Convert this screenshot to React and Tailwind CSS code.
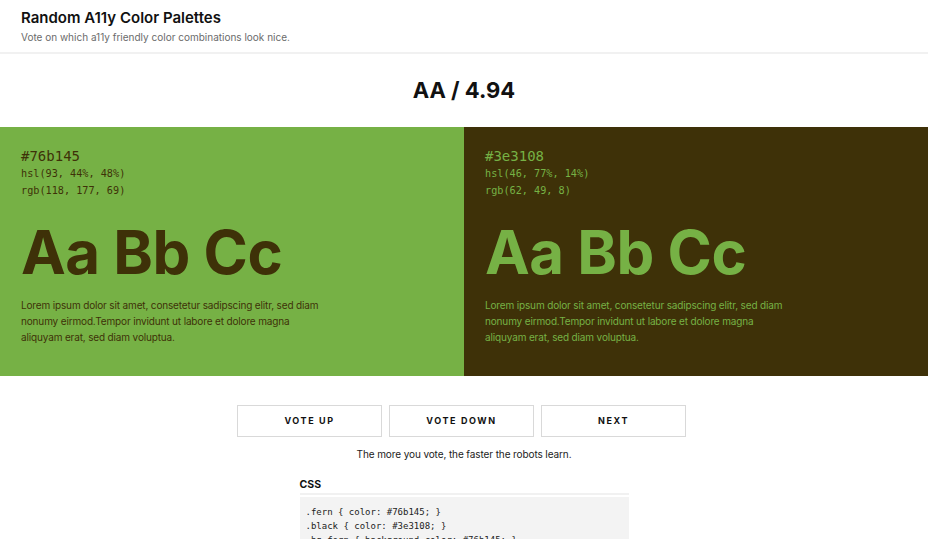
import React from "react";

const palettes = [
  {
    hex: "#76b145",
    hsl: "hsl(93, 44%, 48%)",
    rgb: "rgb(118, 177, 69)",
    panel: "bg-[#76b145] text-[#3e3108]",
  },
  {
    hex: "#3e3108",
    hsl: "hsl(46, 77%, 14%)",
    rgb: "rgb(62, 49, 8)",
    panel: "bg-[#3e3108] text-[#76b145]",
  },
];

const Swatch = ({ p }) => (
  <div className={`h-[249px] px-[21px] pt-[20px] ${p.panel}`}>
    <div className="font-['DejaVu_Sans_Mono',monospace] text-[14px] leading-[18px]">
      {p.hex}
    </div>
    <div className="font-['DejaVu_Sans_Mono',monospace] text-[10.2px] leading-[17px]">
      <div>{p.hsl}</div>
      <div>{p.rgb}</div>
    </div>
    <div className="mt-[23px] text-[60px] font-bold leading-[60px] tracking-[-0.5px]">
      Aa Bb Cc
    </div>
    <p className="mt-[15px] w-[312px] text-[10px] leading-[16px] tracking-[-0.15px]">
      Lorem ipsum dolor sit amet, consetetur sadipscing elitr, sed diam
      nonumy eirmod.Tempor invidunt ut labore et dolore magna aliquyam erat,
      sed diam voluptua.
    </p>
  </div>
);

const VoteButton = ({ label }) => (
  <button className="h-[32px] w-[145px] border border-[#d9d9d9] bg-white text-[9px] font-bold tracking-[1.6px] text-[#111]">
    {label}
  </button>
);

export default function App() {
  return (
    <div className="min-h-screen bg-white font-['Inter',sans-serif] text-[#111]">
      {/* header */}
      <header className="border-b-2 border-[#f1f1f1] px-[21px] pt-[8px] pb-[7px]">
        <h1 className="text-[15px] font-semibold leading-[20px]">
          Random A11y Color Palettes
        </h1>
        <p className="mt-[1px] text-[10px] leading-[16px] text-[#6b6b6b]">
          Vote on which a11y friendly color combinations look nice.
        </p>
      </header>

      <div className="flex h-[73px] items-center justify-center text-[22px] font-bold">
        AA / 4.94
      </div>

      <div className="grid grid-cols-2">
        {palettes.map((p) => (
          <Swatch key={p.hex} p={p} />
        ))}
      </div>

      <div className="mt-[29px] flex justify-center gap-[7px] pr-[5px]">
        <VoteButton label="VOTE UP" />
        <VoteButton label="VOTE DOWN" />
        <VoteButton label="NEXT" />
      </div>

      <p className="mt-[9px] text-center text-[10px] leading-[16px] tracking-[-0.1px] text-[#222]">
        The more you vote, the faster the robots learn.
      </p>

      <div className="mx-auto mt-[15px] w-[329px]">
        <h2 className="border-b-2 border-[#f1f1f1] text-[10.5px] font-bold leading-[16px]">
          CSS
        </h2>
        <pre className="mt-[2px] bg-[#f3f3f3] px-[6px] pt-[8px] pb-[6px] font-['DejaVu_Sans_Mono',monospace] text-[9px] leading-[14px] text-[#222]">
          {`.fern { color: #76b145; }
.black { color: #3e3108; }
.bg-fern { background-color: #76b145; }
.bg-black { background-color: #3e3108; }`}
        </pre>
      </div>
    </div>
  );
}
